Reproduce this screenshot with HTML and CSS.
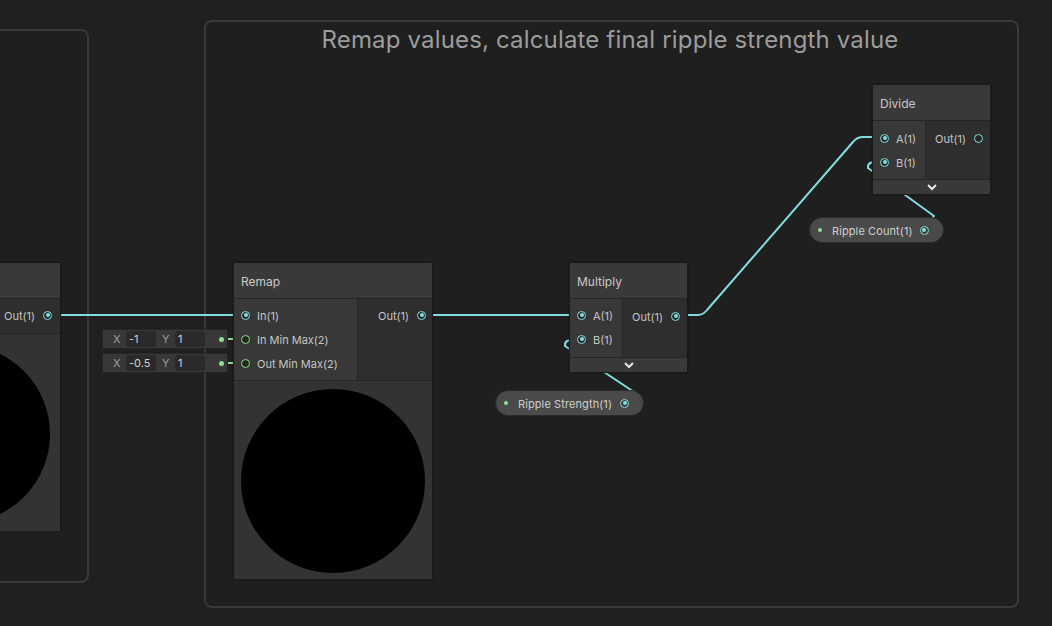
FILE: index.html
```html
<!DOCTYPE html>
<html>
<head>
<meta charset="utf-8">
<title>Shader Graph</title>
<link rel="stylesheet" href="styles.css">
</head>
<body>
<div class="canvas">
  <div class="group group-left"></div>
  <div class="group group-right">
    <div class="group-title">Remap values, calculate final ripple strength value</div>
  </div>

  <svg class="wires" width="1052" height="626" viewBox="0 0 1052 626">
    <g fill="none" stroke="#82dde0" stroke-width="2" stroke-linecap="round" stroke-linejoin="round">
      <path d="M52 315 L240 315"/>
      <path d="M426 315 L576 315"/>
      <path d="M680 315 L698 315 Q703 315 707 310 L853 142 Q857 137 863 137 L879 137"/>
      <path d="M576 340 Q564 339 565 346 L634 392 L624 403"/>
      <path d="M879 162 Q867 161 868 168 L934 216 L924 230"/>
    </g>
    <g fill="none" stroke="#8de08d" stroke-width="2">
      <path d="M220 339 L241 339"/>
      <path d="M220 363 L241 363"/>
    </g>
  </svg>

  <!-- left (cut off) node -->
  <div class="node node-left">
    <div class="node-title"></div>
    <div class="node-ports">
      <div class="col-in"></div>
      <div class="col-out">
        <div class="row row-out"><span class="label">Out(1)</span><span class="port on"></span></div>
      </div>
    </div>
    <div class="preview"><div class="disc"></div></div>
  </div>

  <!-- Remap node -->
  <div class="node node-remap">
    <div class="node-title">Remap</div>
    <div class="node-ports">
      <div class="col-in">
        <div class="row row-in"><span class="port on"></span><span class="label">In(1)</span></div>
        <div class="row row-in"><span class="port green"></span><span class="label">In Min Max(2)</span></div>
        <div class="row row-in"><span class="port green"></span><span class="label">Out Min Max(2)</span></div>
      </div>
      <div class="col-out">
        <div class="row row-out"><span class="label">Out(1)</span><span class="port on"></span></div>
      </div>
    </div>
    <div class="preview"><div class="disc"></div></div>
  </div>

  <div class="inline-field field-1">
    <span class="axis">X</span><span class="num num-x">-1</span>
    <span class="axis">Y</span><span class="num num-y">1</span>
    <span class="gdot"></span>
  </div>
  <div class="inline-field field-2">
    <span class="axis">X</span><span class="num num-x">-0.5</span>
    <span class="axis">Y</span><span class="num num-y">1</span>
    <span class="gdot"></span>
  </div>

  <!-- Multiply node -->
  <div class="node node-small node-multiply">
    <div class="node-title">Multiply</div>
    <div class="node-ports">
      <div class="col-in">
        <div class="row row-in"><span class="port on"></span><span class="label">A(1)</span></div>
        <div class="row row-in"><span class="port on"></span><span class="label">B(1)</span></div>
      </div>
      <div class="col-out">
        <div class="row row-out"><span class="label">Out(1)</span><span class="port on"></span></div>
      </div>
    </div>
    <div class="collapse">
      <svg width="10" height="7" viewBox="0 0 10 7"><path d="M1 1 L5 5 L9 1" fill="none" stroke="#e6e6e6" stroke-width="2"/></svg>
    </div>
  </div>

  <!-- Divide node -->
  <div class="node node-small node-divide">
    <div class="node-title">Divide</div>
    <div class="node-ports">
      <div class="col-in">
        <div class="row row-in"><span class="port on"></span><span class="label">A(1)</span></div>
        <div class="row row-in"><span class="port on"></span><span class="label">B(1)</span></div>
      </div>
      <div class="col-out">
        <div class="row row-out"><span class="label">Out(1)</span><span class="port"></span></div>
      </div>
    </div>
    <div class="collapse">
      <svg width="10" height="7" viewBox="0 0 10 7"><path d="M1 1 L5 5 L9 1" fill="none" stroke="#e6e6e6" stroke-width="2"/></svg>
    </div>
  </div>

  <!-- property pills -->
  <div class="pill pill-count">
    <span class="gdot"></span><span class="label">Ripple Count(1)</span><span class="port on"></span>
  </div>
  <div class="pill pill-strength">
    <span class="gdot"></span><span class="label">Ripple Strength(1)</span><span class="port on"></span>
  </div>
</div>
</body>
</html>
```

FILE: styles.css
```css
* { box-sizing: border-box; }

html, body {
  margin: 0;
  padding: 0;
  background: #202020;
  overflow: hidden;
}

body {
  font-family: Inter, "Noto Sans", "DejaVu Sans", sans-serif;
  color: #c4c4c4;
}

.canvas {
  position: relative;
  width: 1052px;
  height: 626px;
  overflow: hidden;
  background: #202020;
}

/* groups */
.group {
  position: absolute;
  border: 2px solid #393939;
  border-radius: 8px;
  background: #1f1f1f;
}
.group-left {
  left: -40px;
  top: 29px;
  width: 129px;
  height: 554px;
}
.group-right {
  left: 204px;
  top: 20px;
  width: 815px;
  height: 588px;
  display: flex;
  justify-content: center;
}
.group-title {
  margin-top: 3px;
  margin-left: -3px;
  font-size: 24px;
  color: #9c9c9c;
  letter-spacing: 0.16px;
  line-height: 30px;
}

.wires {
  position: absolute;
  left: 0;
  top: 0;
}

/* nodes */
.node {
  position: absolute;
  background: #2e2e2e;
  border: 1px solid #1a1a1a;
  border-radius: 3px;
  display: flex;
  flex-direction: column;
  font-size: 11px;
  box-shadow: 0 0 2px rgba(0,0,0,0.4);
}
.node-title {
  height: 36px;
  flex: none;
  background: #393939;
  border-bottom: 1px solid #252525;
  padding-left: 7px;
  padding-top: 1px;
  display: flex;
  align-items: center;
  font-size: 12px;
  color: #c9c9c9;
}
.node-ports {
  display: flex;
  flex: none;
}
.col-in {
  background: #383838;
  padding: 4px 0 4px 0;
  border-right: 1px solid #262626;
}
.col-out {
  flex: 1;
  background: #2e2e2e;
  padding: 4px 0 4px 0;
  display: flex;
  flex-direction: column;
  align-items: flex-end;
}
.row {
  height: 24px;
  display: flex;
  align-items: center;
  white-space: nowrap;
}
.row-in {
  padding-left: 7px;
  gap: 7px;
}
.row-out {
  padding-right: 6px;
  gap: 8px;
}
.label { color: #c4c4c4; padding-top: 2px; }

.port {
  width: 9px;
  height: 9px;
  border-radius: 50%;
  border: 1px solid #84dfe2;
  background: #262626;
  position: relative;
  flex: none;
}
.port.on::after {
  content: "";
  position: absolute;
  left: 1.5px;
  top: 1.5px;
  width: 4px;
  height: 4px;
  border-radius: 50%;
  background: #84dfe2;
}
.port.green {
  border-color: #8de08d;
  background: #1e2a1e;
}

.preview {
  flex: none;
  background: #333333;
  border-top: 1px solid #252525;
  position: relative;
  overflow: hidden;
}
.disc {
  position: absolute;
  border-radius: 50%;
  background: #000;
}

/* left cut-off node */
.node-left {
  left: -140px;
  top: 262px;
  width: 201px;
  height: 269px;
}
.node-left .node-ports { height: 34px; }
.node-left .col-in { width: 120px; }
.node-left .col-out { padding-top: 4px; }
.node-left .row-out { padding-right: 8px; gap: 8px; }
.node-left .preview { height: 198px; }
.node-left .disc {
  left: 11px;
  top: 11px;
  width: 178px;
  height: 178px;
}

/* remap */
.node-remap {
  left: 233px;
  top: 262px;
  width: 200px;
  height: 318px;
}
.node-remap .node-ports { height: 81px; }
.node-remap .col-in { width: 124px; }
.node-remap .preview { height: 199px; }
.node-remap .disc {
  left: 7px;
  top: 8px;
  width: 184px;
  height: 184px;
}

/* small nodes */
.node-small {
  width: 119px;
  height: 111px;
}
.node-small .node-ports { height: 58px; }
.node-small .col-in { width: 53px; }
.node-small .col-out { padding-top: 5px; }
.node-small .row-out { padding-right: 7px; gap: 8px; }
.collapse {
  flex: 1;
  background: #393939;
  border-top: 1px solid #252525;
  display: flex;
  align-items: center;
  justify-content: center;
}
.node-multiply { left: 569px; top: 262px; }
.node-divide { left: 872px; top: 84px; }
.node-divide .col-in { padding-top: 5px; }

/* inline value fields */
.inline-field {
  position: absolute;
  left: 102px;
  width: 126px;
  height: 20px;
  background: #383838;
  border: 1px solid #262626;
  border-radius: 2px;
  display: flex;
  align-items: center;
  font-size: 11px;
  padding-left: 10px;
}
.field-1 { top: 329px; }
.field-2 { top: 353px; }
.axis {
  color: #9e9e9e;
  width: 13px;
  flex: none;
}
.num {
  height: 16px;
  background: #2a2a2a;
  border-radius: 3px;
  color: #d2d2d2;
  padding-left: 3px;
  line-height: 16px;
  margin-right: 6px;
  flex: none;
}
.num-x { width: 30px; }
.num-y { width: 30px; }
.inline-field .gdot { margin-left: 8px; width: 5px; height: 5px; }

.gdot {
  width: 4px;
  height: 4px;
  border-radius: 50%;
  background: #8de08d;
  flex: none;
}

/* pills */
.pill {
  position: absolute;
  height: 26px;
  border-radius: 13px;
  background: #4a4a4a;
  border: 1px solid #2b2b2b;
  display: flex;
  align-items: center;
  font-size: 11px;
  padding-left: 8px;
  white-space: nowrap;
}
.pill .label { color: #cfcfcf; margin-left: 10px; letter-spacing: 0.1px; }
.pill .port { background: #3a3a3a; }
.pill-count {
  left: 809px;
  top: 217px;
  width: 135px;
}
.pill-count .port { margin-left: 7px; }
.pill-strength {
  left: 495px;
  top: 390px;
  width: 149px;
}
.pill-strength .port { margin-left: 8px; }
```
